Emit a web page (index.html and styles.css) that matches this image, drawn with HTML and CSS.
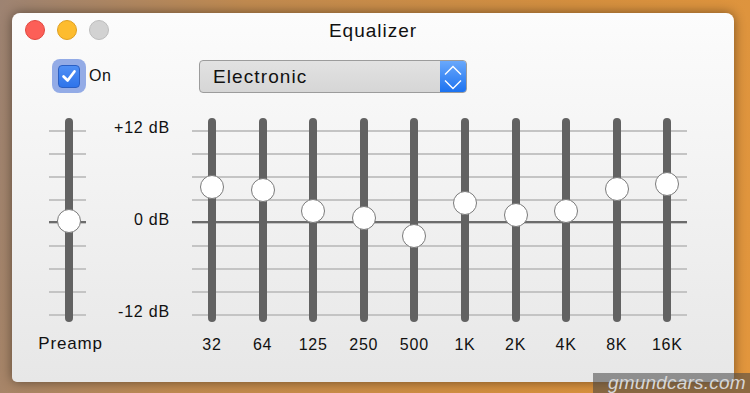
FILE: index.html
```html
<!DOCTYPE html>
<html>
<head lang="en">
    <meta charset="UTF-8">
    <title>Equalizer</title>
    <link rel="stylesheet" href="styles.css">
</head>
<body>
<div class="window">
    <div class="titlebar">
        <div class="lights">
            <span class="light red"></span>
            <span class="light yellow"></span>
            <span class="light grey"></span>
        </div>
        <div class="title">Equalizer</div>
        <div></div>
    </div>
    <div class="controls">
        <label class="toggle">
            <span class="check-ring">
                <span class="check">
                    <svg width="22" height="22" viewBox="0 0 22 22"><path d="M5 11.5 L9.5 16 L17 6" fill="none" stroke="#fff" stroke-width="3" stroke-linecap="round" stroke-linejoin="round"/></svg>
                </span>
            </span>
            On
        </label>
        <div class="preset">
            <span class="preset-name">Electronic</span>
            <span class="preset-arrows">
                <svg width="26" height="33" viewBox="0 0 26 33"><path d="M5 13.5 L13 5.5 L21 13.5 M5 19.5 L13 27.5 L21 19.5" fill="none" stroke="#fff" stroke-width="1.4"/></svg>
            </span>
        </div>
    </div>
    <div class="eq">
        <div class="slider preamp">
            <div class="track-box lines"><span class="track"></span><span class="knob" style="top:91px"></span></div>
            <div class="band-label">Preamp</div>
        </div>
        <div class="db-scale">
            <span>+12 dB</span>
            <span>0 dB</span>
            <span>-12 dB</span>
        </div>
        <div class="bands lines">
            <div class="slider"><div class="track-box"><span class="track"></span><span class="knob" style="top:57px"></span></div><div class="band-label">32</div></div>
            <div class="slider"><div class="track-box"><span class="track"></span><span class="knob" style="top:60px"></span></div><div class="band-label">64</div></div>
            <div class="slider"><div class="track-box"><span class="track"></span><span class="knob" style="top:81px"></span></div><div class="band-label">125</div></div>
            <div class="slider"><div class="track-box"><span class="track"></span><span class="knob" style="top:88px"></span></div><div class="band-label">250</div></div>
            <div class="slider"><div class="track-box"><span class="track"></span><span class="knob" style="top:106px"></span></div><div class="band-label">500</div></div>
            <div class="slider"><div class="track-box"><span class="track"></span><span class="knob" style="top:73px"></span></div><div class="band-label">1K</div></div>
            <div class="slider"><div class="track-box"><span class="track"></span><span class="knob" style="top:85px"></span></div><div class="band-label">2K</div></div>
            <div class="slider"><div class="track-box"><span class="track"></span><span class="knob" style="top:81px"></span></div><div class="band-label">4K</div></div>
            <div class="slider"><div class="track-box"><span class="track"></span><span class="knob" style="top:59px"></span></div><div class="band-label">8K</div></div>
            <div class="slider"><div class="track-box"><span class="track"></span><span class="knob" style="top:54px"></span></div><div class="band-label">16K</div></div>
        </div>
    </div>
</div>
<div class="watermark">gmundcars.com</div>
</body>
</html>
```

FILE: styles.css
```css
* {
    margin: 0;
    padding: 0;
    box-sizing: border-box;
}

body {
    width: 750px;
    height: 393px;
    overflow: hidden;
    position: relative;
    font-family: "Liberation Sans", Arial, sans-serif;
    color: #111;
    background: linear-gradient(100deg, #9d8372 0%, #c08a50 30%, #d48f3f 70%, #e2963d 100%);
    padding: 13px 0 0 12px;
}

.window {
    width: 722px;
    height: 369px;
    border-radius: 8px 8px 5px 5px;
    background: linear-gradient(#fcfcfc, #e7e7e7);
    box-shadow: 0 0 12px rgba(0, 0, 0, 0.45);
}

/* title bar */
.titlebar {
    height: 34px;
    display: grid;
    grid-template-columns: 1fr auto 1fr;
    align-items: center;
    padding: 0 13px;
}

.lights {
    display: flex;
    gap: 12px;
}

.light {
    width: 20px;
    height: 20px;
    border-radius: 50%;
}

.light.red {
    background: #fc5f57;
    border: 1px solid #e0483f;
}

.light.yellow {
    background: #fdbc2e;
    border: 1px solid #de9f22;
}

.light.grey {
    background: #d2d2d2;
    border: 1px solid #bdbdbd;
}

.title {
    font-size: 19px;
    letter-spacing: 1px;
    padding-top: 2px;
}

/* on switch and preset */
.controls {
    display: flex;
    align-items: center;
    height: 34px;
    margin-top: 12px;
    padding-left: 40px;
}

.toggle {
    width: 147px;
    display: flex;
    align-items: center;
    gap: 3px;
    font-size: 16px;
    letter-spacing: 0.6px;
}

.check-ring {
    width: 34px;
    height: 34px;
    border-radius: 8px;
    background: #93abe6;
    display: flex;
    align-items: center;
    justify-content: center;
}

.check {
    width: 22px;
    height: 23px;
    border-radius: 4px;
    background: linear-gradient(#4f8ff5, #2f74ea);
    border: 1px solid #2a5fc4;
    display: flex;
    align-items: center;
    justify-content: center;
}

.preset {
    width: 268px;
    height: 33px;
    display: flex;
    border: 1px solid #9c9c9c;
    border-radius: 4px;
    overflow: hidden;
    background: linear-gradient(#e2e2e2, #d6d6d6);
}

.preset-name {
    flex: 1;
    font-size: 19px;
    letter-spacing: 1.1px;
    line-height: 31px;
    padding-left: 13px;
}

.preset-arrows {
    width: 26px;
    background: linear-gradient(#69a8fb, #1c72f0);
    display: flex;
}

/* sliders */
.eq {
    display: flex;
    margin-top: 25px;
    padding-left: 37px;
}

.lines {
    background-image:
        linear-gradient(#6c6c6c, #6c6c6c),
        repeating-linear-gradient(transparent 0, transparent 12px, #c4c4c4 12px, #c4c4c4 14px, transparent 14px, transparent 23px);
    background-size: 100% 2px, 100% 204px;
    background-position: 0 103px, 0 0;
    background-repeat: no-repeat;
}

.slider {
    width: 40px;
    display: flex;
    flex-direction: column;
    align-items: center;
}

.track-box {
    position: relative;
    width: 40px;
    height: 204px;
    display: flex;
    justify-content: center;
}

.preamp .track-box {
    width: 37px;
    margin-right: 3px;
    justify-content: flex-start;
    padding-left: 16px;
}

.track {
    width: 8px;
    height: 204px;
    border-radius: 4px;
    background: #626262;
}

.knob {
    position: absolute;
    left: 50%;
    margin-left: -12px;
    width: 24px;
    height: 24px;
    border-radius: 50%;
    background: #fff;
    border: 1px solid #7a7a7a;
}

.preamp .knob {
    left: 20px;
}

.band-label {
    margin-top: 14px;
    font-size: 16px;
    letter-spacing: 0.8px;
    line-height: 18px;
    white-space: nowrap;
}

.preamp .band-label {
    font-size: 17px;
    margin-top: 13px;
    margin-left: 3px;
}

.db-scale {
    width: 81px;
    height: 204px;
    display: flex;
    flex-direction: column;
    justify-content: space-between;
    align-items: flex-end;
    padding: 1px 0;
    font-size: 16px;
    letter-spacing: 0.8px;
    line-height: 18px;
    margin-right: 22px;
}

.bands {
    width: 495px;
    display: grid;
    grid-template-columns: repeat(10, 40px);
    column-gap: 10.6px;
}

.watermark {
    position: absolute;
    right: 0;
    bottom: 0;
    width: 157px;
    height: 20px;
    padding-left: 15px;
    background: rgba(70, 70, 70, 0.55);
    color: #d6d6d6;
    font-style: italic;
    font-size: 19px;
    line-height: 20px;
    letter-spacing: 0.2px;
}
```
